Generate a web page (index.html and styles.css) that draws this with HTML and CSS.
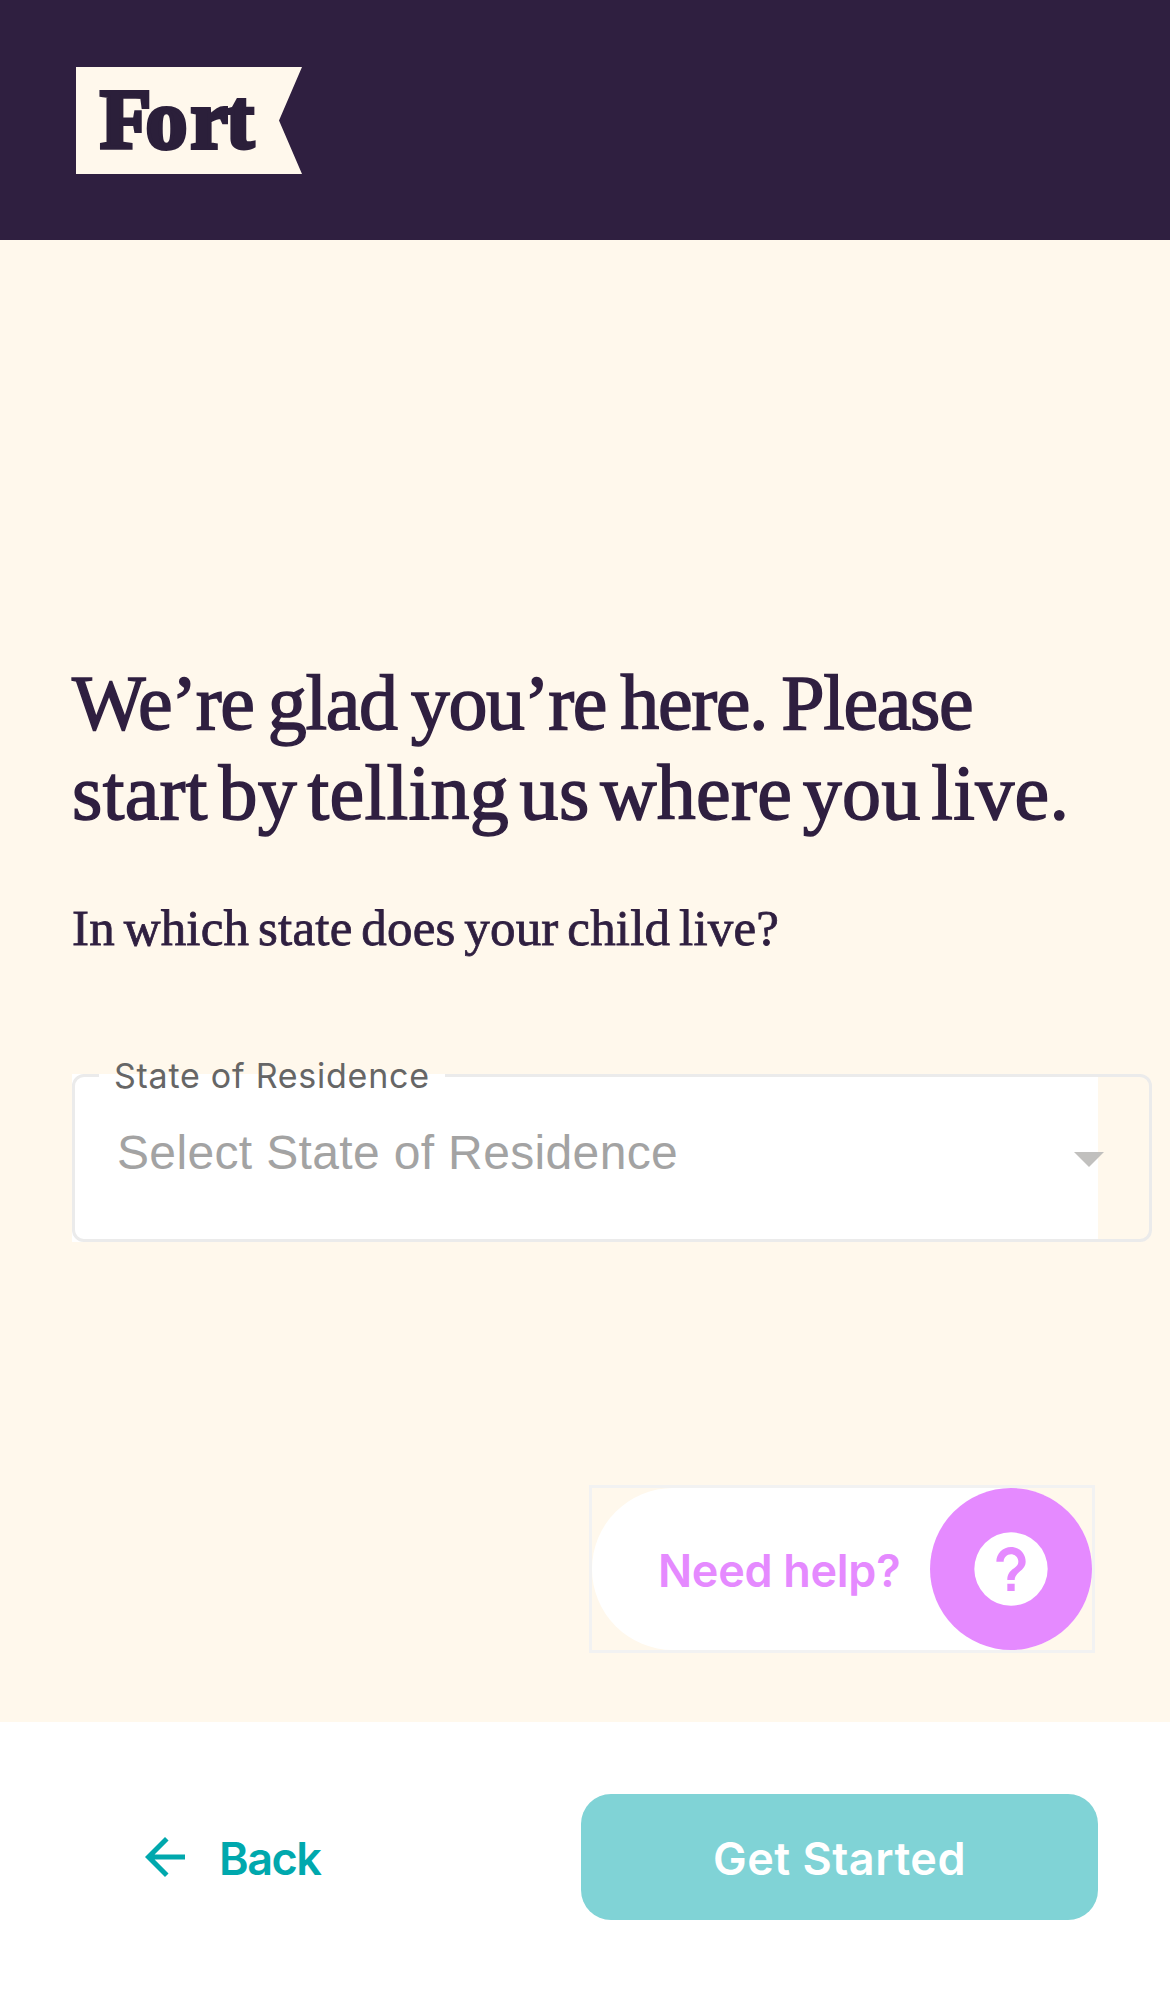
FILE: index.html
```html
<!DOCTYPE html>
<html lang="en">
<head>
<meta charset="utf-8">
<title>Fort</title>
<link rel="stylesheet" href="styles.css">
</head>
<body>
<header class="header">
  <svg class="logo" width="226" height="107" viewBox="0 0 226 107" role="img" aria-label="Fort">
    <path class="logo-flag" d="M0 0H226L203 53.5L226 107H0Z"/>
    <text class="logo-text" y="81.4" x="24 69.5 114.5 150">Fort</text>
  </svg>
</header>
<main class="main">
  <h1 class="title"><span class="title-first">We’re glad you’re here. Please</span><br><span class="title-second">start by telling us where you live.</span></h1>
  <p class="question">In which state does your child live?</p>
  <div class="select">
    <fieldset class="outline">
      <legend class="legend">State of Residence</legend>
      <span class="placeholder">Select State of Residence</span>
      <svg class="caret" width="30" height="15" viewBox="0 0 30 15"><path d="M0 0H30L15 15Z"/></svg>
    </fieldset>
  </div>
  <div class="help">
    <div class="help-pill">
      <span class="help-label">Need help?</span>
      <span class="help-circle">
        <svg width="88" height="88" viewBox="0 0 24 24"><circle class="help-disc" cx="12" cy="12" r="10"/><path class="help-mark" d="M11 18h2v-2h-2v2zM12 6c-2.21 0-4 1.79-4 4h2c0-1.1.9-2 2-2s2 .9 2 2c0 2-3 1.75-3 5h2c0-2.25 3-2.5 3-5 0-2.21-1.79-4-4-4z"/></svg>
      </span>
    </div>
  </div>
</main>
<footer class="footer">
  <button class="back" type="button">
    <svg width="60" height="60" viewBox="0 0 24 24"><path d="M20 11H7.83l5.59-5.59L12 4l-8 8 8 8 1.41-1.41L7.83 13H20v-2z"/></svg>
    <span>Back</span>
  </button>
  <button class="start" type="button">Get Started</button>
</footer>
</body>
</html>
```

FILE: styles.css
```css
* {
  box-sizing: border-box;
}

body {
  margin: 0;
  min-height: 1992px;
  display: flex;
  flex-direction: column;
  background: #fff8ec;
  color: #2f1f40;
  overflow-x: hidden;
}

.header {
  height: 240px;
  padding-left: 76px;
  display: flex;
  align-items: center;
  background: #2f1f40;
}

.logo {
  display: block;
}

.logo-flag {
  fill: #fff8ec;
}

.logo-text {
  font: bold 84px "Liberation Serif", serif;
  fill: #2b1f3a;
  stroke: #2b1f3a;
  stroke-width: 4px;
}

.main {
  height: 1482px;
  padding: 418px 72px 0;
}

.title {
  margin: 0;
  font: 400 78px/90px "Liberation Serif", serif;
  white-space: nowrap;
  -webkit-text-stroke: 1.5px #2f1f40;
}

.title-first {
  letter-spacing: -1.4px;
  word-spacing: -3.8px;
}

.title-second {
  letter-spacing: 0.3px;
  word-spacing: -9.2px;
}

.question {
  margin: 60px 0 0;
  font: 51px/60px "Liberation Serif", serif;
  letter-spacing: 0.2px;
  word-spacing: -4.2px;
  -webkit-text-stroke: 0.8px #2f1f40;
}

.select {
  margin-top: 116px;
  height: 168px;
  background: #fff;
}

.outline {
  position: relative;
  width: 1080px;
  height: 168px;
  margin: 0;
  padding: 0 48px 0 42px;
  border: 3px solid #ebebeb;
  border-radius: 12px;
}

.legend {
  height: 3px;
  margin-left: -18px;
  padding: 0 17px 0 15px;
  width: 346px;
  font: 34px/3px Inter, sans-serif;
  letter-spacing: 0.75px;
  color: #666;
  white-space: nowrap;
}

.placeholder {
  display: block;
  padding-top: 46px;
  font: 48px/60px "Liberation Sans", sans-serif;
  letter-spacing: 0.35px;
  color: #a3a3a3;
}

.caret {
  position: absolute;
  right: 45px;
  top: 75px;
  fill: #c1c0be;
}

.help {
  width: 506px;
  height: 168px;
  margin: 243px 3px 0 auto;
  border: 3px solid #f2f2f2;
}

.help-pill {
  height: 162px;
  display: flex;
  align-items: center;
  justify-content: space-between;
  background: #fff;
  border-radius: 81px;
}

.help-label {
  padding: 4px 0 0 66px;
  font: 600 45px/60px Inter, sans-serif;
  letter-spacing: -0.3px;
  color: #e58aff;
}

.help-circle {
  width: 162px;
  height: 162px;
  display: flex;
  align-items: center;
  justify-content: center;
  border-radius: 50%;
  background: #e58aff;
}

.help-disc {
  fill: #fff;
}

.help-mark {
  fill: #e58aff;
}

.footer {
  height: 270px;
  padding: 72px 72px 0;
  display: flex;
  justify-content: space-between;
  align-items: flex-start;
  background: #fff;
}

.back,
.start {
  height: 126px;
  border: 0;
  font: 600 45px/60px Inter, sans-serif;
}

.back {
  display: flex;
  align-items: center;
  gap: 24px;
  padding: 0 0 0 63px;
  background: none;
  color: #00a8ad;
  letter-spacing: -1.5px;
}

.back svg {
  fill: #00a8ad;
}

.back span {
  padding: 4px 0 0;
}

.start {
  width: 517px;
  padding: 4px 0 0;
  border-radius: 30px;
  background: #80d3d6;
  color: #fff;
  letter-spacing: 0.5px;
}
```
